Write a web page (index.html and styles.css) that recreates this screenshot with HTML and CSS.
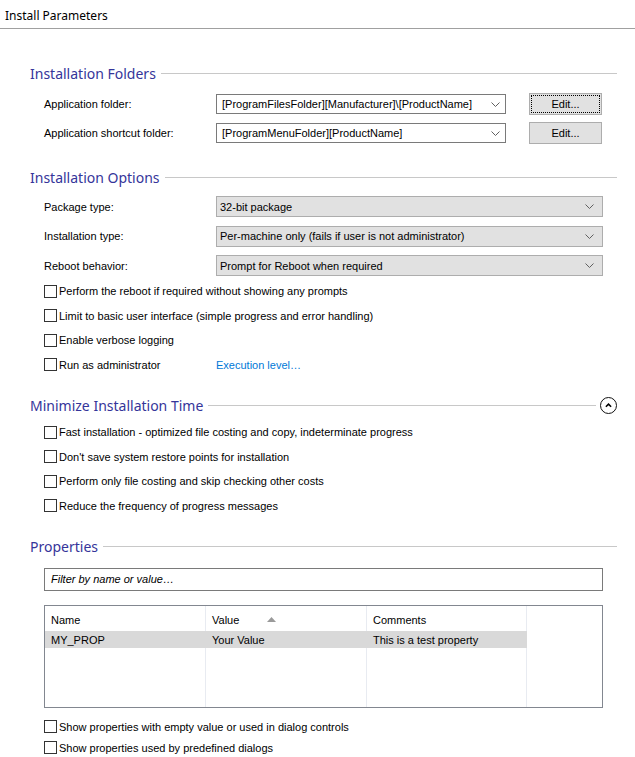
FILE: index.html
```html
<!DOCTYPE html>
<html lang="en">
<head>
    <meta charset="utf-8">
    <meta name="viewport" content="width=device-width, initial-scale=1.0">
    <title>Install Parameters</title>
    <link rel="stylesheet" href="styles.css">
</head>
<body>
    <header class="page-title">Install Parameters</header>
    <main class="content">
        <section class="group folders">
            <h2 class="group-head"><span>Installation Folders</span><i class="rule"></i></h2>
            <div class="field-row">
                <label>Application folder:</label>
                <div class="combo combo-edit"><span>[ProgramFilesFolder][Manufacturer]\[ProductName]</span><svg class="chev" viewBox="0 0 9 5"><path d="M0.5 0.5 L4.5 4.5 L8.5 0.5"/></svg></div>
                <button class="btn focused">Edit...</button>
            </div>
            <div class="field-row">
                <label>Application shortcut folder:</label>
                <div class="combo combo-edit"><span>[ProgramMenuFolder][ProductName]</span><svg class="chev" viewBox="0 0 9 5"><path d="M0.5 0.5 L4.5 4.5 L8.5 0.5"/></svg></div>
                <button class="btn">Edit...</button>
            </div>
        </section>

        <section class="group options">
            <h2 class="group-head"><span>Installation Options</span><i class="rule"></i></h2>
            <div class="select-row">
                <label>Package type:</label>
                <div class="combo combo-list"><span>32-bit package</span><svg class="chev" viewBox="0 0 9 5"><path d="M0.5 0.5 L4.5 4.5 L8.5 0.5"/></svg></div>
            </div>
            <div class="select-row">
                <label>Installation type:</label>
                <div class="combo combo-list"><span>Per-machine only (fails if user is not administrator)</span><svg class="chev" viewBox="0 0 9 5"><path d="M0.5 0.5 L4.5 4.5 L8.5 0.5"/></svg></div>
            </div>
            <div class="select-row">
                <label>Reboot behavior:</label>
                <div class="combo combo-list"><span>Prompt for Reboot when required</span><svg class="chev" viewBox="0 0 9 5"><path d="M0.5 0.5 L4.5 4.5 L8.5 0.5"/></svg></div>
            </div>
            <ul class="checks">
                <li><span class="box"></span>Perform the reboot if required without showing any prompts</li>
                <li><span class="box"></span>Limit to basic user interface (simple progress and error handling)</li>
                <li><span class="box"></span>Enable verbose logging</li>
                <li class="with-link"><span class="box"></span><span class="check-text">Run as administrator</span><a href="#" class="link">Execution level…</a></li>
            </ul>
        </section>

        <section class="group minimize">
            <h2 class="group-head"><span>Minimize Installation Time</span><i class="rule"></i>
                <span class="collapse"><svg viewBox="0 0 8 5"><path d="M1 4 L4 1 L7 4"/></svg></span>
            </h2>
            <ul class="checks">
                <li><span class="box"></span>Fast installation - optimized file costing and copy, indeterminate progress</li>
                <li><span class="box"></span>Don't save system restore points for installation</li>
                <li><span class="box"></span>Perform only file costing and skip checking other costs</li>
                <li><span class="box"></span>Reduce the frequency of progress messages</li>
            </ul>
        </section>

        <section class="group properties">
            <h2 class="group-head"><span>Properties</span><i class="rule"></i></h2>
            <div class="filter">Filter by name or value…</div>
            <div class="grid">
                <div class="cell head">Name</div>
                <div class="cell head">Value <svg class="sort" viewBox="0 0 9 5"><path d="M0 5 L4.5 0 L9 5 Z"/></svg></div>
                <div class="cell head">Comments</div>
                <div class="cell head filler"></div>
                <div class="cell sel">MY_PROP</div>
                <div class="cell sel">Your Value</div>
                <div class="cell sel">This is a test property</div>
                <div class="cell filler"></div>
                <div class="cell"></div>
                <div class="cell"></div>
                <div class="cell"></div>
                <div class="cell filler"></div>
            </div>
            <ul class="checks tight">
                <li><span class="box"></span>Show properties with empty value or used in dialog controls</li>
                <li><span class="box"></span>Show properties used by predefined dialogs</li>
            </ul>
        </section>
    </main>
</body>
</html>
```

FILE: styles.css
```css
body {
    margin: 0;
    background: #fff;
    color: #000;
    font-family: "Liberation Sans", Arial, sans-serif;
    font-size: 11px;
}

.page-title {
    height: 29px;
    box-sizing: border-box;
    padding: 7px 0 0 5px;
    font-family: "Noto Sans", "Open Sans", sans-serif;
    font-size: 12px;
    border-bottom: 1px solid #a0a0a0;
}

.content {
    padding: 0 18px 0 30px;
}

.group-head {
    display: flex;
    align-items: center;
    height: 20px;
    margin: 0;
    font-family: "Noto Sans", "Open Sans", sans-serif;
    font-size: 14px;
    font-weight: normal;
    color: #35359a;
}
.group-head .rule {
    flex: 1;
    height: 1px;
    margin-left: 5px;
    background: #c8c8c8;
}

.folders .group-head { margin-top: 34px; margin-bottom: 10px; }
.options .group-head { margin-top: 23px; margin-bottom: 9px; }
.minimize .group-head { margin-top: 18px; margin-bottom: 5px; }
.properties .group-head { margin-top: 18px; margin-bottom: 12px; }

.field-row {
    display: grid;
    grid-template-columns: 172px 290px 73px;
    align-items: center;
    height: 22px;
    padding-left: 14px;
    margin-bottom: 7px;
}
.field-row .btn {
    width: 73px;
    margin-left: 23px;
}

.select-row {
    display: grid;
    grid-template-columns: 172px 1fr;
    align-items: center;
    padding: 0 14px;
    margin-bottom: 8.5px;
}

.combo {
    display: flex;
    align-items: center;
    justify-content: space-between;
    box-sizing: border-box;
    border: 1px solid #7a7a7a;
    background: #fff;
}
.combo-edit {
    height: 20px;
    padding: 0 5px 0 5px;
}
.combo-list {
    height: 21px;
    padding: 0 8px 0 3px;
    background: #e1e1e1;
    border-color: #adadad;
}
.chev {
    width: 9px;
    height: 5px;
    fill: none;
    stroke: #606060;
    stroke-width: 1;
}

.btn {
    height: 22px;
    box-sizing: border-box;
    border: 1px solid #adadad;
    background: #e1e1e1;
    font: inherit;
    color: #000;
    padding: 0;
}
.btn.focused {
    outline: 1px dotted #000;
    outline-offset: -3px;
}

.checks {
    list-style: none;
    margin: 0;
    padding: 0 0 0 14px;
}
.checks li {
    display: flex;
    align-items: center;
    height: 24.5px;
}
.checks.tight li {
    height: 21px;
}
.box {
    width: 13px;
    height: 13px;
    box-sizing: border-box;
    border: 1px solid #333;
    background: #fff;
    margin-right: 2px;
    flex: none;
}
.options .checks {
    margin-top: -5.5px;
}
.with-link .check-text {
    width: 157px;
}
.link {
    color: #0078d7;
    text-decoration: none;
}

.collapse {
    display: flex;
    align-items: center;
    justify-content: center;
    width: 15px;
    height: 15px;
    margin-left: 4px;
    border: 1.5px solid #111;
    border-radius: 50%;
}
.collapse svg {
    width: 7px;
    height: 5px;
    fill: none;
    stroke: #000;
    stroke-width: 1.8;
}

.filter {
    margin: 0 14px;
    height: 23px;
    box-sizing: border-box;
    border: 1px solid #7a7a7a;
    padding: 4px 6px;
    font-style: italic;
}

.grid {
    display: grid;
    grid-template-columns: 161px 161px 160px 1fr;
    grid-template-rows: 25px 17px 1fr;
    margin: 14px 14px 8px 14px;
    height: 103px;
    box-sizing: border-box;
    border: 1px solid #828790;
}
.cell {
    display: flex;
    align-items: center;
    padding-left: 6px;
    border-right: 1px solid #e8ebf1;
}
.cell.filler {
    border-right: none;
}
.cell.head {
    padding-top: 2px;
}
.cell.sel {
    background: #d9d9d9;
    border-right-color: #d9d9d9;
}
.sort {
    width: 9px;
    height: 5px;
    margin-left: 28px;
    fill: #9a9a9a;
}
```
